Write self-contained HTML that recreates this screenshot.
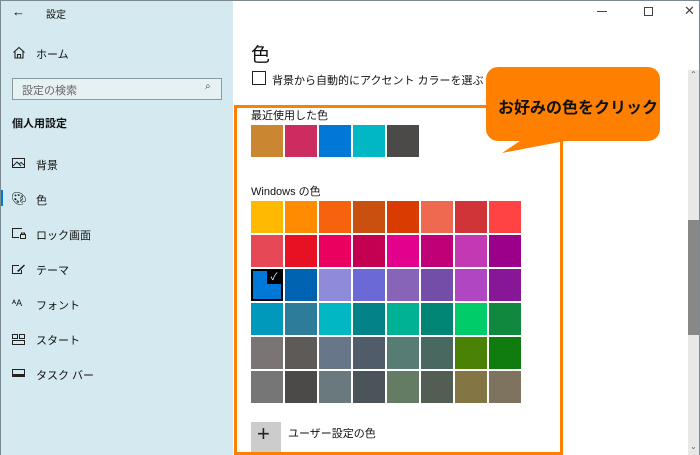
<!DOCTYPE html>
<html><head><meta charset="utf-8"><style>
*{margin:0;padding:0;box-sizing:border-box}
body{width:700px;height:455px;overflow:hidden;position:relative;background:#fff;font-family:"Liberation Sans","Noto Sans CJK JP",sans-serif;color:#000}
.a{position:absolute}
#side{left:0;top:0;width:233px;height:455px;background:#d5eaf0}
.t{font-size:11px;color:#111;white-space:nowrap}
.sw{position:absolute;width:32px;height:32px}
#frame{position:absolute;left:0;top:0;width:700px;height:455px;border:1px solid #7a8a90;border-bottom:none;pointer-events:none}
</style></head><body>
<div id="side" class="a"></div>
<div class="a t" style="left:12px;top:4px;font-size:13px">←</div>
<div class="a t" style="left:46px;top:6px;font-size:10px">設定</div>
<svg class="a" style="left:12px;top:46px" width="14" height="13" viewBox="0 0 14 13"><path d="M1.5 6.5L7 1.5L12.5 6.5M3 5.5V12H11V5.5M5.5 12V8.5H8.5V12" fill="none" stroke="#222" stroke-width="1.1"/></svg>
<div class="a t" style="left:36px;top:46px">ホーム</div>
<div class="a" style="left:12px;top:78px;width:210px;height:22px;border:1.5px solid #8a9a9e;background:#e6f1f4"></div>
<div class="a t" style="left:22px;top:82px;color:#666">設定の検索</div>
<div class="a t" style="left:205px;top:81px;color:#444;font-size:10px">⌕</div>
<div class="a t" style="left:12px;top:115px;font-weight:bold">個人用設定</div>
<svg class="a" style="left:12px;top:158px" width="13" height="11"><rect x=".5" y=".5" width="12" height="9" fill="none" stroke="#222"/><path d="M1 8L5 4L9 8M7 6L9 4.5L12 7" fill="none" stroke="#222"/></svg>
<div class="a t" style="left:36px;top:157px">背景</div>
<div class="a" style="left:0;top:190px;width:3px;height:16px;background:#0078d7"></div>
<div class="a t" style="left:11px;top:191px;font-size:13px">🎨︎</div>
<div class="a t" style="left:36px;top:192px">色</div>
<svg class="a" style="left:12px;top:228px" width="14" height="12"><path d="M10 .5H.5V9.5H7" fill="none" stroke="#222"/><rect x="8.5" y="6.5" width="5" height="4" fill="none" stroke="#222"/><path d="M9.5 6.5V5H12.5V6.5" fill="none" stroke="#222"/></svg>
<div class="a t" style="left:36px;top:227px">ロック画面</div>
<svg class="a" style="left:12px;top:263px" width="14" height="12"><path d="M7 2.5H.5V10.5H9.5V7" fill="none" stroke="#222"/><path d="M5 8L12 1.5L13 2.5L6.5 9Z" fill="#222"/></svg>
<div class="a t" style="left:36px;top:262px">テーマ</div>
<div class="a t" style="left:12px;top:298px;font-size:9px">ᴬA</div>
<div class="a t" style="left:36px;top:297px">フォント</div>
<svg class="a" style="left:12px;top:334px" width="13" height="11"><rect x=".5" y=".5" width="5" height="4" fill="none" stroke="#222"/><rect x="7.5" y=".5" width="5" height="4" fill="none" stroke="#222"/><rect x=".5" y="6.5" width="12" height="4" fill="none" stroke="#222"/></svg>
<div class="a t" style="left:36px;top:332px">スタート</div>
<svg class="a" style="left:12px;top:369px" width="13" height="9"><rect x=".5" y=".5" width="12" height="7" fill="none" stroke="#222"/><rect x="1" y="5" width="11" height="2" fill="#222"/></svg>
<div class="a t" style="left:36px;top:367px">タスク バー</div>

<div class="a" style="left:597px;top:11px;width:10px;height:1px;background:#444"></div>
<div class="a" style="left:644px;top:7px;width:9px;height:9px;border:1px solid #444"></div>
<div class="a t" style="left:684px;top:3px;font-size:13px;color:#444">✕</div>
<div class="a" style="left:688px;top:70px;width:11px;height:385px;background:#e8e8e8"></div>
<div class="a" style="left:688px;top:220px;width:11px;height:115px;background:#888"></div>
<div class="a t" style="left:690px;top:70px;font-size:8px;color:#666">⌃</div>
<div class="a t" style="left:690px;top:442px;font-size:8px;color:#666">⌄</div>

<div class="a t" style="left:251px;top:40px;font-size:19px">色</div>
<div class="a" style="left:252px;top:71px;width:14px;height:14px;border:1.5px solid #222"></div>
<div class="a t" style="left:272px;top:72px">背景から自動的にアクセント カラーを選ぶ</div>
<div class="a t" style="left:251px;top:107px">最近使用した色</div>
<div class="a t" style="left:251px;top:183px">Windows の色</div>
<div id="sw"></div>
<div class="a" style="left:251px;top:422px;width:30px;height:30px;background:#ccc"></div>
<div class="a t" style="left:257px;top:421px;font-size:22px;font-weight:300;color:#222">+</div>
<div class="a t" style="left:288px;top:425px">ユーザー設定の色</div>

<div class="a" style="left:234px;top:105px;width:329px;height:350px;border:3px solid #ff8000;border-bottom-width:3px"></div>
<svg class="a" style="left:480px;top:65px" width="185" height="95"><path d="M18 2H168A12 12 0 0 1 180 14V64A12 12 0 0 1 168 76H85L22 88L40 76H18A12 12 0 0 1 6 64V14A12 12 0 0 1 18 2Z" fill="#ff8000"/></svg>
<div class="a" style="left:498px;top:94px;font-size:16px;font-weight:bold;color:#111;white-space:nowrap">お好みの色をクリック</div>
<div id="frame"></div>
<script>
var rec=["#ca8630","#cc2c5f","#0078d7","#00b7c3","#4c4a48"];
var g=[["#ffb900","#ff8c00","#f7630c","#ca5010","#da3b01","#ef6950","#d13438","#ff4343"],
["#e74856","#e81123","#ea005e","#c30052","#e3008c","#bf0077","#c239b3","#9a0089"],
["#0078d7","#0063b1","#8e8cd8","#6b69d6","#8764b8","#744da9","#b146c2","#881798"],
["#0099bc","#2d7d9a","#00b7c3","#038387","#00b294","#018574","#00cc6a","#10893e"],
["#7a7574","#5d5a58","#68768a","#515c6b","#567c73","#486860","#498205","#107c10"],
["#767676","#4c4a48","#69797e","#4a5459","#647c64","#525e54","#847545","#7e735f"]];
var h="";
rec.forEach(function(c,i){h+='<div class="sw" style="left:'+(251+i*34)+'px;top:125px;background:'+c+'"></div>'});
g.forEach(function(r,j){r.forEach(function(c,i){h+='<div class="sw" style="left:'+(251+i*34)+'px;top:'+(201+j*34)+'px;background:'+c+'"></div>'})});
h+='<div class="sw" style="left:251px;top:269px;border:2px solid #000;background:#0078d7"></div><div class="a" style="left:267px;top:271px;width:14px;height:13px;background:#000;color:#fff;font-size:10px;text-align:center;line-height:13px">✓</div>';
document.getElementById("sw").innerHTML=h;
</script>
</body></html>
